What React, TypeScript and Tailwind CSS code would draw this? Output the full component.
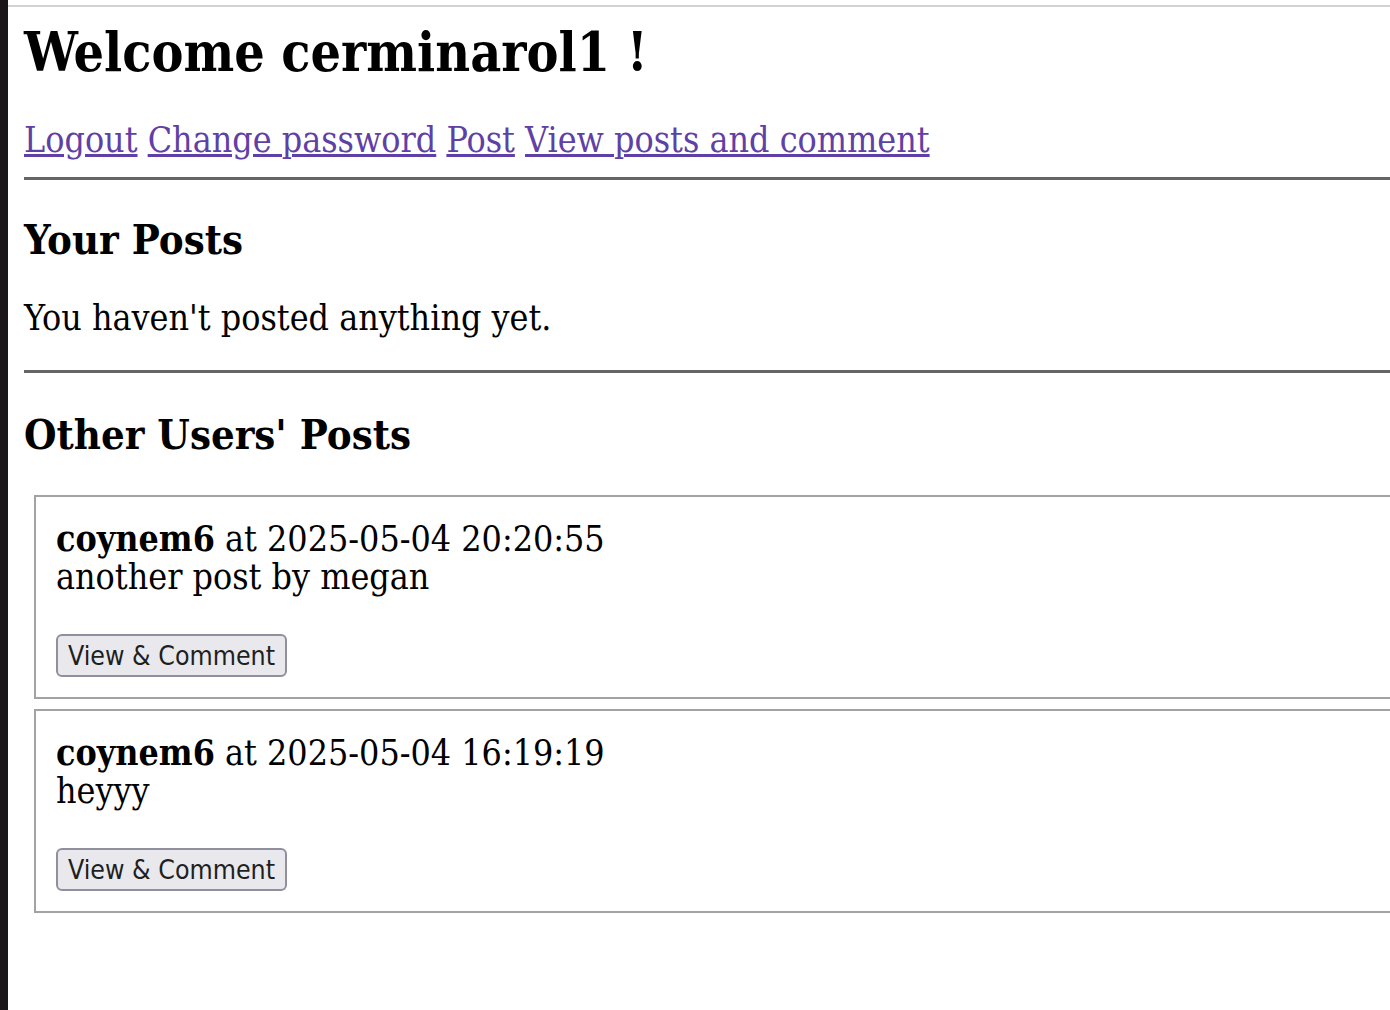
type Post = { author: string; at: string; body: string };

const posts: Post[] = [
  { author: "coynem6", at: "2025-05-04 20:20:55", body: "another post by megan" },
  { author: "coynem6", at: "2025-05-04 16:19:19", body: "heyyy" },
];

function PostCard({ post }: { post: Post }) {
  return (
    <div className="ml-[10px] w-[1420px] border-2 border-[#a3a3a3] px-[20px] pt-[23px] pb-[20px]">
      <div className="text-[35.5px] leading-[37.5px] text-black">
        <strong>{post.author}</strong> at {post.at}
        <br />
        {post.body}
      </div>
      <button className="mt-[39px] flex h-[43px] items-center rounded-[6px] border-2 border-[#8f8f9d] bg-[#e9e9ed] px-[10px] font-['DejaVu_Sans_Condensed',sans-serif] text-[26.5px] text-[#1f1f1f]">
        View &amp; Comment
      </button>
    </div>
  );
}

export default function App() {
  return (
    <div className="flex min-h-[1010px] w-[1390px] overflow-hidden bg-white font-['DejaVu_Serif_Condensed',serif]">
      <div className="w-[8px] shrink-0 bg-[#1b1418]" />
      <div className="flex-1 overflow-hidden">
        <div className="mt-[5px] h-[2px] bg-[#d2d2d2]" />
        <div className="pl-[16px]">
          <h1 className="mt-[15px] text-[53.3px] font-bold leading-[62px] text-black">Welcome cerminarol1 !</h1>
          <nav className="mt-[35px] text-[35.5px] leading-[41px] text-[#5f40a6]">
            <a href="#" className="underline">Logout</a>{" "}
            <a href="#" className="underline">Change password</a>{" "}
            <a href="#" className="underline">Post</a>{" "}
            <a href="#" className="underline">View posts and comment</a>
          </nav>
          <div className="mt-[17px] h-[3px] w-[1420px] bg-[#666]" />
          <h3 className="mt-[36px] text-[41.5px] font-bold leading-[48px] text-black">Your Posts</h3>
          <p className="mt-[33px] text-[35.5px] leading-[41px] text-black">You haven't posted anything yet.</p>
          <div className="mt-[32px] h-[3px] w-[1420px] bg-[#666]" />
          <h3 className="mt-[38px] text-[41.5px] font-bold leading-[48px] text-black">Other Users' Posts</h3>
          <div className="mt-[36px] flex flex-col gap-[10px]">
            {posts.map((p, i) => (
              <PostCard key={i} post={p} />
            ))}
          </div>
        </div>
      </div>
    </div>
  );
}
